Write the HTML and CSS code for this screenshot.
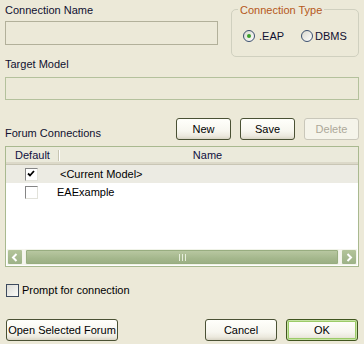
FILE: index.html
```html
<!DOCTYPE html>
<html>
<head>
<meta charset="utf-8">
<link rel="stylesheet" href="styles.css">
</head>
<body>
<div class="dlg">
  <div class="top">
    <div class="namecol">
      <div class="lbl">Connection Name</div>
      <div class="field field-name"></div>
    </div>
    <div class="group">
      <div class="legend">Connection Type</div>
      <div class="radios">
        <div class="radio">
          <svg class="rdot" width="12" height="12" viewBox="0 0 12 12">
            <defs><linearGradient id="rg" x1="0" y1="0" x2="1" y2="1"><stop offset="0" stop-color="#d8d7cc"/><stop offset="1" stop-color="#ffffff"/></linearGradient></defs>
            <circle cx="6" cy="6" r="5.5" fill="url(#rg)" stroke="#3b4f6e"/>
            <circle cx="6" cy="6" r="2" fill="#3aa02a"/>
          </svg>
          <span>.EAP</span>
        </div>
        <div class="radio radio-dbms">
          <svg class="rdot" width="12" height="12" viewBox="0 0 12 12">
            <circle cx="6" cy="6" r="5.5" fill="url(#rg)" stroke="#3b4f6e"/>
          </svg>
          <span>DBMS</span>
        </div>
      </div>
    </div>
  </div>
  <div class="lbl">Target Model</div>
  <div class="field field-target"></div>
  <div class="forumrow">
    <div class="lbl">Forum Connections</div>
    <div class="btns">
      <div class="btn btn-sm">New</div>
      <div class="btn btn-sm">Save</div>
      <div class="btn btn-sm btn-dis">Delete</div>
    </div>
  </div>
  <div class="list">
    <div class="lhead">
      <div class="hcol hdefault">Default</div>
      <div class="hcol hname">Name</div>
    </div>
    <div class="row row-sel">
      <span class="cb"><svg width="8" height="8" viewBox="0 0 8 8"><path d="M1 3.5 L3 5.5 L7 1" fill="none" stroke="#000" stroke-width="1.8"/></svg></span>
      <span class="rtext rtext-sel">&lt;Current Model&gt;</span>
    </div>
    <div class="row">
      <span class="cb"></span>
      <span class="rtext">EAExample</span>
    </div>
    <div class="lfill"></div>
    <div class="hscroll">
      <div class="sbtn"><svg width="8" height="9" viewBox="0 0 8 9"><path d="M5.5 1 L2 4.5 L5.5 8" fill="none" stroke="#fff" stroke-width="2"/></svg></div>
      <div class="thumb"><svg width="7" height="7" viewBox="0 0 7 7"><path d="M0.5 0 V7 M3.5 0 V7 M6.5 0 V7" stroke="#e6eedb" stroke-width="1"/></svg></div>
      <div class="sbtn"><svg width="8" height="9" viewBox="0 0 8 9"><path d="M2.5 1 L6 4.5 L2.5 8" fill="none" stroke="#fff" stroke-width="2"/></svg></div>
    </div>
  </div>
  <div class="prompt">
    <span class="chk"></span>
    <span>Prompt for connection</span>
  </div>
  <div class="bottom">
    <div class="btn btn-open">Open Selected Forum</div>
    <div class="btn btn-wide">Cancel</div>
    <div class="btn btn-wide btn-ok">OK</div>
  </div>
</div>
</body>
</html>
```

FILE: styles.css
```css
html, body {
  margin: 0;
  padding: 0;
  background: #ece9d8;
}
.dlg {
  width: 364px;
  height: 344px;
  box-sizing: border-box;
  padding: 0 5px;
  font-family: "Liberation Sans", Arial, sans-serif;
  font-size: 11px;
  color: #101030;
  display: flex;
  flex-direction: column;
}
.lbl {
  line-height: 14px;
  height: 14px;
  white-space: nowrap;
}
.top {
  display: flex;
  align-items: flex-start;
  height: 57px;
}
.namecol {
  width: 213px;
  padding-top: 3px;
}
.field {
  box-sizing: border-box;
  border: 1px solid #b2b09a;
  background: #ece9d8;
}
.field-name {
  margin-top: 4px;
  height: 24px;
}
.field-target {
  margin-top: 6px;
  height: 23px;
  border-color: #b4c19c;
}
.group {
  position: relative;
  margin-left: auto;
  margin-top: 9px;
  width: 128px;
  height: 48px;
  box-sizing: border-box;
  border: 1px solid #d0d0bf;
  border-radius: 5px;
}
.legend {
  position: absolute;
  top: -7px;
  left: 6px;
  padding: 0 2px;
  line-height: 14px;
  background: #ece9d8;
  color: #b5581a;
}
.radios {
  display: flex;
  padding: 20px 0 0 11px;
}
.radio {
  display: flex;
  align-items: center;
  height: 12px;
  color: #101030;
}
.rdot {
  display: block;
  margin-right: 4px;
}
.radio-dbms {
  margin-left: 17px;
}
.radio-dbms .rdot {
  margin-right: 2px;
}
.forumrow {
  display: flex;
  align-items: flex-end;
  justify-content: space-between;
  margin-top: 18px;
  height: 22px;
}
.btns {
  display: flex;
  gap: 9px;
}
.btn {
  box-sizing: border-box;
  height: 22px;
  border: 1px solid #4a5134;
  border-radius: 3px;
  background: linear-gradient(#fffffb 0%, #f7f6ef 60%, #ece9de 85%, #d9d5c6 100%);
  color: #000;
  display: flex;
  align-items: center;
  justify-content: center;
  white-space: nowrap;
}
.btn-sm {
  width: 55px;
}
.btn-dis {
  border-color: #c9c7ba;
  background: #f5f4ea;
  color: #aca899;
}
.list {
  margin-top: 6px;
  height: 121px;
  box-sizing: border-box;
  border: 1px solid #a9b98f;
  background: #fff;
  display: flex;
  flex-direction: column;
}
.lhead {
  display: flex;
  height: 18px;
  box-sizing: border-box;
  background: #ebeadb;
  border-bottom: 1px solid #c9c6b5;
  box-shadow: inset 0 -2px 0 #dcd9c9;
  color: #101040;
  line-height: 17px;
}
.hcol {
  text-align: center;
}
.hdefault {
  position: relative;
  width: 53px;
}
.hdefault::after {
  content: "";
  position: absolute;
  right: 0;
  top: 3px;
  height: 11px;
  width: 1px;
  background: #c7c5b2;
  box-shadow: 1px 0 0 #fff;
}
.hname {
  flex: 1;
  padding-right: 2px;
}
.row {
  display: flex;
  align-items: center;
  height: 18px;
  padding-left: 19px;
  color: #000;
}
.row-sel {
  background: #ecebe3;
}
.cb {
  box-sizing: border-box;
  width: 13px;
  height: 13px;
  border: 1px solid;
  border-color: #858585 #e2e2da #e2e2da #858585;
  background: #fff;
  display: flex;
  align-items: flex-start;
  justify-content: flex-start;
  padding: 1px 0 0 1px;
}
.cb svg {
  display: block;
}
.rtext {
  margin-left: 19px;
}
.rtext-sel {
  margin-left: 22px;
}
.lfill {
  flex: 1;
}
.hscroll {
  display: flex;
  height: 16px;
  margin: 0 1px 1px 1px;
  background: #f6f5ef;
  align-items: stretch;
}
.sbtn {
  box-sizing: border-box;
  width: 16px;
  border: 1px solid #f3f5ec;
  border-radius: 2px;
  background: linear-gradient(#b3c49a, #9db287);
  display: flex;
  align-items: center;
  justify-content: center;
}
.sbtn svg {
  display: block;
}
.thumb {
  flex: 1;
  margin: 0 2px;
  box-sizing: border-box;
  border: 1px solid #f0f3e8;
  border-radius: 2px;
  background: linear-gradient(#bac9a3, #a4b78c 60%, #9aae83);
  box-shadow: inset 0 0 0 1px #98ad80;
  display: flex;
  align-items: center;
  justify-content: center;
}
.thumb svg {
  display: block;
}
.prompt {
  display: flex;
  align-items: center;
  margin-top: 16px;
  height: 14px;
  color: #000;
}
.chk {
  box-sizing: border-box;
  width: 13px;
  height: 13px;
  margin-left: 1px;
  margin-right: 3px;
  border: 1px solid #3d4a5e;
  background: linear-gradient(135deg, #dcdcd6, #fbfbf8);
}
.bottom {
  display: flex;
  margin-top: 22px;
  gap: 9px;
}
.btn-open {
  width: 112px;
  margin-left: 1px;
  margin-right: auto;
}
.btn-wide {
  width: 72px;
}
.btn-ok {
  margin-right: 1px;
  border-color: #40551f;
  box-shadow: inset 0 0 0 1px #c6e3a4, inset 0 0 0 2px #9ccb68;
}
```
